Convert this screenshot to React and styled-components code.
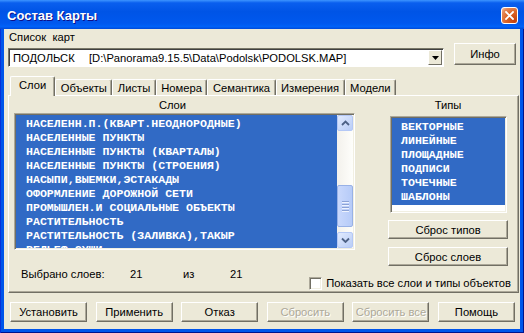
import styled, { createGlobalStyle } from "styled-components";

const GlobalStyle = createGlobalStyle`
  html, body { margin: 0; padding: 0; background: #0055ea; }
  body { font-family: "Liberation Sans", Arial, sans-serif; font-size: 11.2px; color: #000; }
`;

//#region DATA
const layers = [
  "НАСЕЛЕНН.П.(КВАРТ.НЕОДНОРОДНЫЕ)",
  "НАСЕЛЕННЫЕ ПУНКТЫ",
  "НАСЕЛЕННЫЕ ПУНКТЫ (КВАРТАЛЫ)",
  "НАСЕЛЕННЫЕ ПУНКТЫ (СТРОЕНИЯ)",
  "НАСЫПИ,ВЫЕМКИ,ЭСТАКАДЫ",
  "ОФОРМЛЕНИЕ ДОРОЖНОЙ СЕТИ",
  "ПРОМЫШЛЕН.И СОЦИАЛЬНЫЕ ОБЪЕКТЫ",
  "РАСТИТЕЛЬНОСТЬ",
  "РАСТИТЕЛЬНОСТЬ (ЗАЛИВКА),ТАКЫР",
  "РЕЛЬЕФ СУШИ",
];

const types = ["ВЕКТОРНЫЕ", "ЛИНЕЙНЫЕ", "ПЛОЩАДНЫЕ", "ПОДПИСИ", "ТОЧЕЧНЫЕ", "ШАБЛОНЫ"];

const tabs = ["Слои", "Объекты", "Листы", "Номера", "Семантика", "Измерения", "Модели"];

const footer = [
  { label: "Установить" },
  { label: "Применить" },
  { label: "Отказ" },
  { label: "Сбросить", disabled: true },
  { label: "Сбросить все", disabled: true },
  { label: "Помощь" },
];
//#endregion

export default function App() {
  return (
    <>
      <GlobalStyle />
      <Window>
        <TitleBar>
          <Title>Состав Карты</Title>
          <CloseButton>
            <svg width="9" height="9" viewBox="0 0 9 9">
              <path d="M1 1 L8 8 M8 1 L1 8" stroke="#fff" strokeWidth="1.8" strokeLinecap="square" />
            </svg>
          </CloseButton>
        </TitleBar>
        <Body>
          <FieldLabel>Список&nbsp; карт</FieldLabel>
          <ComboRow>
            <Combo>
              <ComboName>ПОДОЛЬСК</ComboName>
              <ComboPath>[D:\Panorama9.15.5\Data\Podolsk\PODOLSK.MAP]</ComboPath>
              <DropButton>
                <svg width="7" height="4" viewBox="0 0 7 4">
                  <polygon points="0,0 7,0 3.5,4" fill="#000" />
                </svg>
              </DropButton>
            </Combo>
            <Button $w={62} $h={22}>Инфо</Button>
          </ComboRow>

          <TabStrip>
            {tabs.map((t, i) => (
              <Tab key={t} $active={i === 0}>{t}</Tab>
            ))}
          </TabStrip>

          <Panel>
            <Columns>
              <Column>
                <Header $shift={24}>Слои</Header>
                <ListBox $h={137} $mt={2}>
                  <Items>
                    {layers.map((l) => (
                      <Item key={l}>{l}</Item>
                    ))}
                  </Items>
                  <ScrollBar>
                    <ScrollArrow>
                      <svg width="9" height="6" viewBox="0 0 9 6">
                        <path d="M1 5 L4.5 1.5 L8 5" stroke="#4d6185" strokeWidth="1.8" fill="none" />
                      </svg>
                    </ScrollArrow>
                    <Track>
                      <TrackGap style={{ height: 54 }} />
                      <Thumb>
                        <Grip />
                        <Grip />
                        <Grip />
                        <Grip />
                      </Thumb>
                    </Track>
                    <ScrollArrow>
                      <svg width="9" height="6" viewBox="0 0 9 6">
                        <path d="M1 1.5 L4.5 5 L8 1.5" stroke="#4d6185" strokeWidth="1.8" fill="none" />
                      </svg>
                    </ScrollArrow>
                  </ScrollBar>
                </ListBox>
              </Column>
              <Column>
                <Header>Типы</Header>
                <ListBox $h={97} $mt={5} $w={117} $ml={2}>
                  <TypeItems>
                    {types.map((t) => (
                      <Item key={t} $pad={9}>{t}</Item>
                    ))}
                  </TypeItems>
                </ListBox>
                <Button $h={19} $mt={7}>Сброс типов</Button>
                <Button $h={19} $mt={8}>Сброс слоев</Button>
              </Column>
            </Columns>
            <PanelFooter>
              <Counter>
                <span>Выбрано слоев:</span>
                <span>21</span>
                <span>из</span>
                <span>21</span>
              </Counter>
              <CheckRow>
                <CheckBox />
                <span>Показать все слои и типы объектов</span>
              </CheckRow>
            </PanelFooter>
          </Panel>

          <ButtonRow>
            {footer.map((b) => (
              <Button key={b.label} $w={77} $h={20} disabled={b.disabled}>
                {b.label}
              </Button>
            ))}
          </ButtonRow>
        </Body>
      </Window>
    </>
  );
}

//#region STYLED COMPONENTS
const Window = styled.div`
  width: 524px;
  height: 333px;
  display: flex;
  flex-direction: column;
  background: #0055ea;
  box-shadow: inset 1px 0 #0831d9, inset -1px 0 #00138c, inset 0 -1px #00138c;
  overflow: hidden;
`;

const TitleBar = styled.div`
  height: 29px;
  flex: none;
  display: flex;
  align-items: center;
  justify-content: space-between;
  padding: 0 6px 0 7px;
  background: linear-gradient(180deg, #3d95ff 0%, #0a5fee 10%, #0054e6 40%, #0058ee 80%, #0062f8 92%, #0049d8 100%);
`;

const Title = styled.div`
  color: #fff;
  font-family: "Liberation Sans", Arial, sans-serif;
  font-weight: bold;
  font-size: 13px;
  text-shadow: 1px 1px #0f1089;
  margin-top: 2px;
`;

const CloseButton = styled.div`
  width: 15px;
  height: 15px;
  margin-top: 1px;
  display: flex;
  align-items: center;
  justify-content: center;
  border: 1px solid #fff;
  border-radius: 3px;
  background: radial-gradient(circle at 85% 85%, #c4400c 0%, #dc6527 50%, #e48a5c 80%, #f6c7ad 100%);
`;

const Body = styled.div`
  flex: 1;
  margin: 0 4px 4px 4px;
  padding: 2px 1px 0 4px;
  background: #ece9d8;
  display: flex;
  flex-direction: column;
`;

const FieldLabel = styled.div`
  height: 12px;
  line-height: 12px;
  padding-left: 1px;
`;

const ComboRow = styled.div`
  height: 24px;
  display: flex;
  align-items: flex-start;
  justify-content: space-between;
  padding-right: 3px;
`;

const Combo = styled.div`
  margin-top: 5px;
  width: 436px;
  height: 19px;
  box-sizing: border-box;
  display: flex;
  align-items: center;
  background: #fff;
  border: 1px solid;
  border-color: #7a7868 #fff #fff #7a7868;
  box-shadow: inset 1px 1px #404040;
  padding-left: 4px;
  white-space: nowrap;
`;

const ComboName = styled.span`
  width: 76px;
  flex: none;
`;

const ComboPath = styled.span`
  flex: 1;
`;

const DropButton = styled.div`
  width: 14px;
  height: 15px;
  margin-right: 1px;
  box-sizing: border-box;
  display: flex;
  align-items: center;
  justify-content: center;
  background: #ece9d8;
  border: 1px solid;
  border-color: #fff #716f64 #716f64 #fff;
`;

const Button = styled.button`
  width: ${({ $w }) => ($w ? `${$w}px` : "100%")};
  height: ${({ $h }) => $h}px;
  margin-top: ${({ $mt }) => $mt || 0}px;
  box-sizing: border-box;
  padding: 0;
  font-family: "Liberation Sans", Arial, sans-serif;
  font-size: 11.2px;
  font-weight: 400;
  color: ${({ disabled }) => (disabled ? "#aca899" : "#000")};
  text-shadow: ${({ disabled }) => (disabled ? "1px 1px #fff" : "none")};
  background: #ece9d8;
  border: 1px solid;
  border-color: #fff #716f64 #716f64 #fff;
  box-shadow: inset -1px -1px #aca899;
  flex: none;
`;

const TabStrip = styled.div`
  margin-top: 9px;
  height: 19px;
  display: flex;
  align-items: flex-end;
  padding-left: 2px;
  position: relative;
  z-index: 1;
`;

const Tab = styled.div`
  height: ${({ $active }) => ($active ? 20 : 16)}px;
  box-sizing: border-box;
  padding: 0 ${({ $active }) => ($active ? 8 : 4.5)}px ${({ $active }) => ($active ? 3 : 0)}px;
  margin-bottom: ${({ $active }) => ($active ? -1 : 0)}px;
  display: flex;
  align-items: center;
  background: #ece9d8;
  border-left: 1px solid #fff;
  border-top: 1px solid #fff;
  border-right: 1px solid #716f64;
  box-shadow: inset -1px 0 #aca899;
  border-radius: 2px 2px 0 0;
`;

const Panel = styled.div`
  height: 198px;
  box-sizing: border-box;
  border: 1px solid;
  border-color: #fff #716f64 #716f64 #fff;
  box-shadow: inset -1px -1px #aca899;
  padding: 3px 0 0 5px;
  display: flex;
  flex-direction: column;
`;

const Columns = styled.div`
  display: grid;
  grid-template-columns: 341px 120px;
  column-gap: 33px;
  align-items: start;
`;

const Column = styled.div`
  display: flex;
  flex-direction: column;
`;

const Header = styled.div`
  height: 12px;
  line-height: 12px;
  text-align: center;
  padding-right: ${({ $shift }) => $shift || 0}px;
`;

const ListBox = styled.div`
  width: ${({ $w }) => ($w ? `${$w}px` : "auto")};
  height: ${({ $h }) => $h}px;
  margin-top: ${({ $mt }) => $mt}px;
  margin-left: ${({ $ml }) => $ml || 0}px;
  box-sizing: border-box;
  display: flex;
  background: #fff;
  border: 1px solid;
  border-color: #aca899 #fff #fff #aca899;
  box-shadow: inset 1px 1px #716f64, inset -1px -1px #f1efe2;
  padding: 1px;
  overflow: hidden;
`;

const Items = styled.div`
  flex: 1;
  background: #316ac5;
  padding-top: 2px;
  overflow: hidden;
`;

const TypeItems = styled.div`
  flex: 1;
  align-self: flex-start;
  background: #316ac5;
  padding: 2px 0 1px;
`;

const Item = styled.div`
  height: 14px;
  line-height: 14px;
  padding-left: ${({ $pad }) => $pad || 10}px;
  color: #fff;
  font-family: "Liberation Mono", "Courier New", monospace;
  font-weight: bold;
  font-size: 11.6px;
  white-space: nowrap;
`;

const ScrollBar = styled.div`
  width: 16px;
  flex: none;
  display: flex;
  flex-direction: column;
  background: linear-gradient(90deg, #f3f1ec, #fefefb);
`;

const ScrollArrow = styled.div`
  height: 16px;
  flex: none;
  box-sizing: border-box;
  display: flex;
  align-items: center;
  justify-content: center;
  background: linear-gradient(135deg, #e1eafe, #b9cdf6);
  border: 1px solid #b4c8f6;
  border-radius: 2px;
`;

const Track = styled.div`
  flex: 1;
  display: flex;
  flex-direction: column;
`;

const TrackGap = styled.div`
  flex: none;
`;

const Thumb = styled.div`
  height: 42px;
  box-sizing: border-box;
  display: flex;
  flex-direction: column;
  align-items: center;
  justify-content: center;
  gap: 1px;
  background: linear-gradient(90deg, #c9d8fc, #b6cbf8);
  border: 1px solid #98b1e6;
  border-radius: 2px;
`;

const Grip = styled.div`
  width: 7px;
  height: 1px;
  background: #8ca3d6;
  box-shadow: 0 1px #eef3fe;
  margin-bottom: 1px;
`;

const PanelFooter = styled.div`
  display: flex;
  align-items: flex-start;
  justify-content: space-between;
  padding-right: 7px;
`;

const Counter = styled.div`
  margin: 2px 0 0 7px;
  display: grid;
  grid-template-columns: 109px 53px 47px auto;
  line-height: 13px;
`;

const CheckRow = styled.div`
  margin-top: 11px;
  display: flex;
  align-items: center;
  gap: 4px;
  line-height: 13px;
`;

const CheckBox = styled.div`
  width: 13px;
  height: 13px;
  box-sizing: border-box;
  background: #fff;
  border: 1px solid;
  border-color: #aca899 #fff #fff #aca899;
  box-shadow: inset 1px 1px #716f64, inset -1px -1px #f1efe2;
`;

const ButtonRow = styled.div`
  margin-top: 9px;
  display: flex;
  justify-content: space-between;
  padding: 0 4px 0 2px;
`;
//#endregion
